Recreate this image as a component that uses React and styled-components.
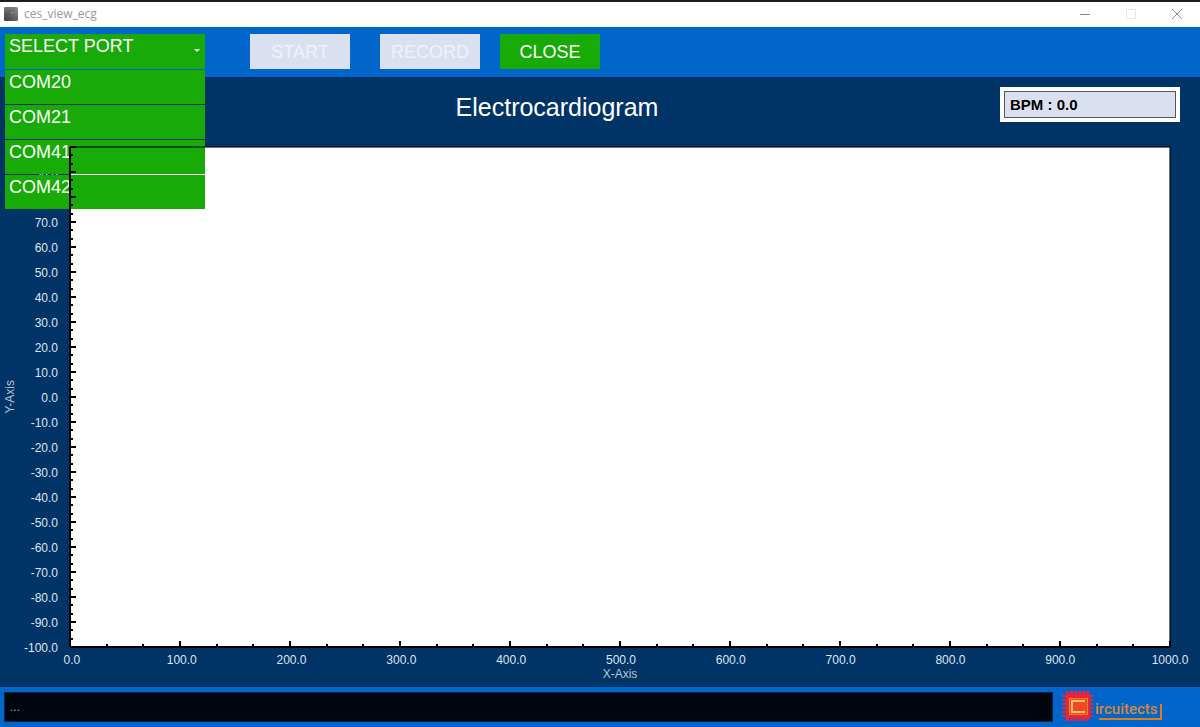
import React, { useState } from "react";
import styled, { createGlobalStyle } from "styled-components";

const GlobalStyle = createGlobalStyle`
  * { box-sizing: border-box; }
  body { margin: 0; overflow: hidden; background: #003366; }
  button, input { font: inherit; color: inherit; border: 0; border-radius: 0; padding: 0; margin: 0; }
`;

const Window = styled.div`
  display: flex;
  flex-direction: column;
  min-height: 100vh;
  overflow: hidden;
  color: #fff;
  background: #003366;
  font-family: "Liberation Sans", Arial, sans-serif;
`;

const TitleBar = styled.header`
  display: flex;
  align-items: center;
  gap: 6px;
  height: 27px;
  padding: 0 0 2px 4px;
  border-top: 2px solid #1d1c22;
  background: #fff;
  color: #999;
  font: 12px "Open Sans", sans-serif;
`;

const WindowName = styled.span`
  flex: 1;
`;

const WindowButton = styled.button`
  display: grid;
  place-items: center;
  width: 46px;
  height: 23px;
  background: none;
  color: ${(p) => (p.disabled ? "#e6e6e6" : "#8c8c8c")};
`;

const WindowButtons = styled.div`
  display: flex;
`;

const Toolbar = styled.nav`
  display: flex;
  height: 50px;
  padding: 7px 5px 0;
  background: #0066cc;
  font-size: 18px;
`;

const PortPicker = styled.div`
  position: relative;
  width: 200px;
  margin-right: 45px;
`;

const PortToggle = styled.button`
  display: flex;
  justify-content: space-between;
  width: 100%;
  height: 35px;
  padding: 0 5px 0 4px;
  background: #18ab07;
  line-height: 24px;
`;

const Arrow = styled.svg`
  margin-top: 15px;
`;

const PortList = styled.ul`
  position: absolute;
  z-index: 1;
  top: 36px;
  left: 0;
  display: grid;
  gap: 1px;
  width: 100%;
  margin: 0;
  padding: 0;
  list-style: none;
`;

const PortOption = styled.button`
  display: flex;
  width: 100%;
  height: 34px;
  padding-left: 4px;
  background: #18ab07;
  line-height: 24px;
`;

const ToolButton = styled.button`
  width: 100px;
  height: 35px;
  margin-right: ${(p) => p.$gap || 0}px;
  padding-top: 2px;
  background: ${(p) => (p.disabled ? "#dbe0f0" : "#18ab07")};
  color: ${(p) => (p.disabled ? "#f0f2fa" : "#fff")};
`;

const Main = styled.main`
  display: flex;
  flex: 1;
  flex-direction: column;
`;

const Heading = styled.div`
  display: grid;
  grid-template-columns: 1fr auto 1fr;
  height: 70px;
  padding: 10px 20px 0 0;
`;

const Title = styled.h1`
  grid-column: 2;
  margin: 0;
  padding-right: 66px;
  font-size: 25px;
  font-weight: 400;
  line-height: 40px;
`;

const Bpm = styled.input`
  justify-self: end;
  width: 180px;
  height: 35px;
  padding: 0 6px;
  border: 4px solid #fff;
  background: #dbe0f0;
  box-shadow: inset 0 0 0 1px #55575f;
  color: #000;
  font-size: 15px;
  font-weight: 700;
`;

const Chart = styled.section`
  display: grid;
  flex: 1;
  grid-template-columns: 20px 38px 1fr;
  grid-template-rows: 1fr 40px;
  padding-right: 30px;
  font-size: 12px;
  color: #dfe6ed;
`;

const YName = styled.div`
  align-self: center;
  justify-self: center;
  writing-mode: vertical-rl;
  transform: rotate(180deg);
  color: #b8c6d4;
`;

const YLabels = styled.div`
  display: flex;
  flex-direction: column;
  margin: -11px 0 -13px;
`;

const YLabel = styled.span`
  display: flex;
  flex: 1;
  align-items: center;
  justify-content: flex-end;
`;

const Plot = styled.div`
  position: relative;
  margin-left: 12px;
  background: #fff;
`;

const Axes = styled.svg`
  position: absolute;
  z-index: 2;
  inset: 0;
  width: 100%;
  height: 100%;
  overflow: visible;
  pointer-events: none;
`;

const XAxis = styled.div`
  grid-column: 3;
  margin-left: 12px;
  line-height: 14px;
  padding-top: 6px;
  text-align: center;
`;

const XLabels = styled.div`
  display: flex;
  margin: 0 -5%;
  padding-left: 2px;
`;

const XLabel = styled.span`
  flex: 1;
`;

const XName = styled.div`
  color: #b8c6d4;
`;

const Footer = styled.footer`
  display: flex;
  gap: 7px;
  height: 40px;
  padding: 5px 36px 5px 4px;
  background: #0066cc;
`;

const Status = styled.input`
  flex: 1;
  min-width: 0;
  padding: 0 5px;
  border: 1px solid #00264d;
  background: #00040c;
  color: #a5a5a5;
  font-size: 12px;
`;

const Logo = styled.svg`
  flex: none;
  margin-top: -2px;
`;

const ports = ["COM20", "COM21", "COM41", "COM42"];
const yValues = Array.from({ length: 21 }, (_, i) => 100 - i * 10);
const xValues = Array.from({ length: 11 }, (_, i) => i * 100);
const yTicks = Array.from({ length: 61 }, (_, i) => i);
const xTicks = Array.from({ length: 31 }, (_, i) => i);

function AppIcon() {
  return (
    <svg width="14" height="14" viewBox="0 0 14 14" aria-hidden="true">
      <defs>
        <linearGradient id="tile" x1="0" y1="1" x2="1" y2="0">
          <stop offset="0" stopColor="#3c3c3c" />
          <stop offset="1" stopColor="#8c8c8c" />
        </linearGradient>
      </defs>
      <rect width="14" height="14" rx="1.5" fill="url(#tile)" />
      <path d="M0 0H9L0 7Z" fill="#777" opacity=".5" />
      <path d="M7 6.5 9 5M10.5 6 12 4.5" stroke="#aaa" opacity=".7" />
    </svg>
  );
}

function PlotAxes() {
  return (
    <Axes shapeRendering="crispEdges" aria-hidden="true">
      <line x1="0" x2="100%" y1="0" y2="0" stroke="#000" strokeOpacity=".55" strokeWidth="2" />
      <line x1="100%" x2="100%" y1="0" y2="100%" stroke="#000" strokeOpacity=".55" strokeWidth="2" />
      {yTicks.map((i) => (
        <line key={i} x1="0" x2={i % 3 ? 3 : 6} y1={`${(i / 60) * 100}%`} y2={`${(i / 60) * 100}%`} stroke="#000" strokeWidth="2" />
      ))}
      {xTicks.map((i) => (
        <svg key={i} x={`${(i / 30) * 100}%`} y="100%" overflow="visible">
          <line y1={i % 3 ? -3 : -6} y2="0" stroke="#000" strokeWidth="2" />
        </svg>
      ))}
      <line x1="0" x2="0" y1="0" y2="100%" stroke="#000" strokeWidth="2" />
      <line x1="0" x2="100%" y1="100%" y2="100%" stroke="#000" strokeWidth="2" />
    </Axes>
  );
}

function CircuitectsLogo() {
  const pins = [4, 8, 12, 16, 20, 24];
  return (
    <Logo width="104" height="34" viewBox="0 0 104 34" role="img" aria-label="Circuitects">
      {pins.map((p) => (
        <g key={p} fill="#ee2436">
          <rect x={p + 2} y="1" width="3" height="30" />
          <rect x="2" y={p + 1} width="31" height="2" />
        </g>
      ))}
      <rect x="6" y="4" width="24" height="24" fill="#ee2436" />
      <rect x="9.5" y="8.5" width="18" height="16" fill="#f04a24" stroke="#f58220" />
      <path d="M25 11H12V22H25" fill="none" stroke="#ffc06a" strokeWidth="2" />
      <text x="35" y="24" fill="#d98634" fontSize="15" fontWeight="500" fontFamily="Roboto, sans-serif">ircuitects</text>
      <path d="M39 29H101V14" fill="none" stroke="#e07d18" strokeWidth="2" />
    </Logo>
  );
}

export default function App() {
  const [open, setOpen] = useState(true);
  const [port, setPort] = useState("SELECT PORT");

  return (
    <Window>
      <GlobalStyle />
      <TitleBar>
        <AppIcon />
        <WindowName>ces_view_ecg</WindowName>
        <WindowButtons>
          <WindowButton aria-label="Minimize">
            <svg width="10" height="10"><path d="M0 5.500H10" stroke="currentColor" /></svg>
          </WindowButton>
          <WindowButton aria-label="Maximize" disabled>
            <svg width="10" height="10"><path d="M.5.5H9.500V9.500H.5Z" fill="none" stroke="currentColor" /></svg>
          </WindowButton>
          <WindowButton aria-label="Close window">
            <svg width="10" height="10"><path d="M0 0 10 10M10 0 0 10" stroke="currentColor" /></svg>
          </WindowButton>
        </WindowButtons>
      </TitleBar>
      <Toolbar>
        <PortPicker>
          <PortToggle aria-haspopup="listbox" aria-expanded={open} onClick={() => setOpen(!open)}>
            {port}
            <Arrow width="6" height="3"><path d="M0 0H6L3 3Z" fill="#fff" /></Arrow>
          </PortToggle>
          {open && (
            <PortList role="listbox" aria-label="Port">
              {ports.map((name) => (
                <li key={name} role="none">
                  <PortOption role="option" aria-selected={name === port} onClick={() => { setPort(name); setOpen(false); }}>{name}</PortOption>
                </li>
              ))}
            </PortList>
          )}
        </PortPicker>
        <ToolButton disabled $gap={30}>START</ToolButton>
        <ToolButton disabled $gap={20}>RECORD</ToolButton>
        <ToolButton>CLOSE</ToolButton>
      </Toolbar>
      <Main>
        <Heading>
          <Title>Electrocardiogram</Title>
          <Bpm readOnly aria-label="Beats per minute" value="BPM : 0.0" />
        </Heading>
        <Chart>
          <YName>Y-Axis</YName>
          <YLabels>
            {yValues.map((v) => <YLabel key={v}>{v.toFixed(1)}</YLabel>)}
          </YLabels>
          <Plot><PlotAxes /></Plot>
          <XAxis>
            <XLabels>
              {xValues.map((v) => <XLabel key={v}>{v.toFixed(1)}</XLabel>)}
            </XLabels>
            <XName>X-Axis</XName>
          </XAxis>
        </Chart>
      </Main>
      <Footer>
        <Status readOnly aria-label="Status" value="..." />
        <CircuitectsLogo />
      </Footer>
    </Window>
  );
}
